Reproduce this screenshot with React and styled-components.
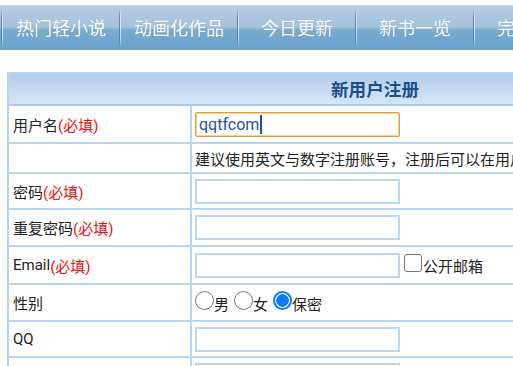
import React from "react";
import styled, { createGlobalStyle } from "styled-components";

const Global = createGlobalStyle`
  html, body { margin: 0; padding: 0; background: #fff; }
  body {
    font-family: Roboto, "Noto Sans CJK SC", sans-serif;
    overflow: hidden;
    width: 513px;
    height: 366px;
  }
`;

const Page = styled.div`
  width: 760px;
  padding-top: 5px;
`;

const NavBar = styled.nav`
  display: flex;
  height: 45px;
  padding-left: 1px;
  box-sizing: border-box;
  background: linear-gradient(
    #c9daeb 0px,
    #b3cce3 2px,
    #a3c2dc 22px,
    #78abd0 25px,
    #6aa2ca 45px
  );
  overflow: hidden;
`;

const NavItem = styled.a`
  flex: 0 0 118px;
  display: flex;
  align-items: center;
  color: #fff;
  font-size: 18px;
  text-decoration: none;
  text-shadow: 0 0 1px rgba(40, 80, 120, 0.35);
  &::before {
    content: "";
    align-self: stretch;
    flex: 0 0 2px;
    margin: 3px 0;
    background: linear-gradient(
      to right,
      rgba(70, 115, 160, 0.75) 0 1px,
      rgba(225, 238, 248, 0.8) 1px 2px
    );
    mask-image: linear-gradient(transparent, #000 25%, #000 75%, transparent);
  }
`;

const NavLabel = styled.span`
  flex: 1;
  text-align: center;
  padding-bottom: 2px;
`;

const Form = styled.div`
  display: grid;
  grid-template-columns: 183px 551px;
  margin: 22px 0 0 7px;
  border-top: 2px solid #b6d5f1;
  border-left: 2px solid #b6d5f1;
  width: 734px;
`;

const Header = styled.div`
  grid-column: 1 / -1;
  height: 32px;
  box-sizing: border-box;
  display: flex;
  align-items: center;
  justify-content: center;
  border-right: 2px solid #b6d5f1;
  border-bottom: 2px solid #a9ccee;
  background: linear-gradient(#b2cbea, #d6e6f8);
  color: #1b4f88;
  font-weight: bold;
  font-size: 17.6px;
  padding-bottom: 1px;
`;

const Cell = styled.div`
  height: ${(p) => p.$h}px;
  box-sizing: border-box;
  display: flex;
  align-items: center;
  border-right: 2px solid #b6d5f1;
  border-bottom: 2px solid #b6d5f1;
  font-size: 15px;
  color: #222;
  padding-left: ${(p) => (p.$field ? 3 : 4)}px;
  white-space: nowrap;
  overflow: hidden;
`;

const Required = styled.span`
  color: #f01010;
`;

const TextInput = styled.input`
  width: 205px;
  height: 25px;
  box-sizing: border-box;
  border: 2px solid #bad8f2;
  padding: 0 3px;
  margin: 0;
  font: 16px Roboto, "Noto Sans CJK SC", sans-serif;
  outline: none;
  background: #fff;
`;

const FocusedInput = styled.div`
  width: 205px;
  height: 25px;
  box-sizing: border-box;
  border: 1px solid #e39c33;
  box-shadow: inset 0 0 0 1px #f6d39a;
  border-radius: 2px;
  padding: 0 3px;
  display: flex;
  align-items: center;
  font-size: 16px;
  color: #1d568f;
`;

const Caret = styled.span`
  display: inline-block;
  width: 2px;
  height: 19px;
  margin-left: 1px;
  background: #1d568f;
`;

const Inline = styled.div`
  display: block;
  line-height: 20px;
`;

const Check = styled.input`
  appearance: none;
  width: 18px;
  height: 18px;
  margin: 0 1px 0 4px;
  box-sizing: border-box;
  border: 1px solid #767676;
  border-radius: 3px;
  background: #fff;
  vertical-align: baseline;
`;

const Radio = styled.input`
  appearance: none;
  width: 19px;
  height: 19px;
  margin: 0 0 0 ${(p) => (p.$first ? 0 : 5)}px;
  box-sizing: border-box;
  border-radius: 50%;
  border: 1px solid #767676;
  background: #fff;
  vertical-align: baseline;
  &:checked {
    border: 2px solid #0b7bf6;
    background: radial-gradient(circle, #0b7bf6 0 6px, #fff 6.5px);
  }
`;

const FieldRow = styled.div`
  display: flex;
  align-items: center;
`;

const Sep = styled.div`
  position: relative;
`;

const navItems = ["热门轻小说", "动画化作品", "今日更新", "新书一览", "完本小说"];

export default function App() {
  return (
    <>
      <Global />
      <Page>
        <NavBar>
          {navItems.map((t) => (
            <NavItem key={t} href="#">
              <NavLabel>{t}</NavLabel>
            </NavItem>
          ))}
        </NavBar>
        <Form>
          <Header>新用户注册</Header>

          <Cell $h={38}>
            用户名<Required>(必填)</Required>
          </Cell>
          <Cell $h={38} $field>
            <FocusedInput>
              qqtfcom
              <Caret />
            </FocusedInput>
          </Cell>

          <Cell $h={30} />
          <Cell $h={30} $field>
            建议使用英文与数字注册账号，注册后可以在用户中心修改昵称
          </Cell>

          <Cell $h={36}>
            密码<Required>(必填)</Required>
          </Cell>
          <Cell $h={36} $field>
            <TextInput type="password" />
          </Cell>

          <Cell $h={37}>
            重复密码<Required>(必填)</Required>
          </Cell>
          <Cell $h={37} $field>
            <TextInput type="password" />
          </Cell>

          <Cell $h={38}>
            Email<Required>(必填)</Required>
          </Cell>
          <Cell $h={38} $field>
            <FieldRow>
              <TextInput type="text" />
              <Inline>
                <Check type="checkbox" />公开邮箱
              </Inline>
            </FieldRow>
          </Cell>

          <Cell $h={37}>性别</Cell>
          <Cell $h={37} $field>
            <Inline>
              <Radio type="radio" name="sex" $first />男
              <Radio type="radio" name="sex" />女
              <Radio type="radio" name="sex" defaultChecked />保密
            </Inline>
          </Cell>

          <Cell $h={36}>QQ</Cell>
          <Cell $h={36} $field>
            <TextInput type="text" />
          </Cell>

          <Cell $h={36}>生日</Cell>
          <Cell $h={36} $field>
            <TextInput type="text" />
          </Cell>
        </Form>
      </Page>
    </>
  );
}
